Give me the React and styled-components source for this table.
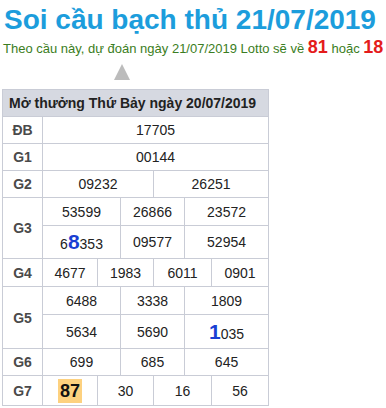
import React from 'react';
import styled, { createGlobalStyle } from 'styled-components';

const GlobalStyle = createGlobalStyle`
  body {
    margin: 0;
    background: #ffffff;
    font-family: "Liberation Sans", Arial, sans-serif;
  }
`;

const Page = styled.div`
  padding: 0 0 0 2px;
  width: 384px;
`;

const Title = styled.h1`
  margin: 0;
  padding: 4px 0 0 2px;
  font-size: 28px;
  line-height: 32px;
  font-weight: bold;
  color: #1c9ddc;
`;

const Subtitle = styled.p`
  margin: 0;
  padding: 1px 0 0 1px;
  font-size: 13px;
  line-height: 20px;
  color: #3b7d22;
  white-space: nowrap;
`;

const Hot = styled.b`
  color: #e41b1b;
  font-size: 18px;
`;

const Pointer = styled.div`
  width: 0;
  height: 0;
  margin: 5px 0 9px 112px;
  border-left: 8px solid transparent;
  border-right: 8px solid transparent;
  border-bottom: 16px solid #bcbcbc;
`;

const Table = styled.table`
  border-collapse: collapse;
  table-layout: fixed;
  width: 267px;
  border: 1px solid #c9ccd6;
`;

const Cell = styled.td`
  border: 1px solid #c9ccd6;
  padding: 0;
  height: ${p => p.$h || 26}px;
  text-align: center;
  font-size: 14px;
  color: #222;
`;

const Label = styled(Cell)`
  font-weight: bold;
  color: #4a4a4a;
  font-size: 14px;
`;

const Head = styled.th`
  background: #d6d9e1;
  border: 1px solid #c9ccd6;
  height: 26px;
  padding: 0 0 0 6px;
  text-align: left;
  font-size: 14px;
  font-weight: bold;
  color: #222;
`;

const Mark = styled.b`
  color: #1a3fd3;
  font-size: 21px;
`;

const Chosen = styled.b`
  display: inline-block;
  background: #fdd17f;
  color: #111;
  font-size: 18px;
  line-height: 24px;
  padding: 0 2px;
`;

const widths = [40, 55, 23, 33, 31, 27, 57];

export default function App() {
  return (
    <Page>
      <GlobalStyle />
      <Title>Soi cầu bạch thủ 21/07/2019</Title>
      <Subtitle>
        Theo cầu này, dự đoán ngày 21/07/2019 Lotto sẽ về <Hot>81</Hot> hoặc <Hot>18</Hot>
      </Subtitle>
      <Pointer />
      <Table>
        <colgroup>
          {widths.map((w, i) => <col key={i} style={{ width: w }} />)}
        </colgroup>
        <thead>
          <tr><Head colSpan={7}>Mở thưởng Thứ Bảy ngày 20/07/2019</Head></tr>
        </thead>
        <tbody>
          <tr><Label>ĐB</Label><Cell colSpan={6}>17705</Cell></tr>
          <tr><Label>G1</Label><Cell colSpan={6}>00144</Cell></tr>
          <tr>
            <Label>G2</Label>
            <Cell colSpan={3}>09232</Cell>
            <Cell colSpan={3}>26251</Cell>
          </tr>
          <tr>
            <Label rowSpan={2}>G3</Label>
            <Cell colSpan={2} $h={27}>53599</Cell>
            <Cell colSpan={2}>26866</Cell>
            <Cell colSpan={2}>23572</Cell>
          </tr>
          <tr>
            <Cell colSpan={2} $h={32}>6<Mark>8</Mark>353</Cell>
            <Cell colSpan={2}>09577</Cell>
            <Cell colSpan={2}>52954</Cell>
          </tr>
          <tr>
            <Label $h={27}>G4</Label>
            <Cell>4677</Cell>
            <Cell colSpan={2}>1983</Cell>
            <Cell colSpan={2}>6011</Cell>
            <Cell>0901</Cell>
          </tr>
          <tr>
            <Label rowSpan={2}>G5</Label>
            <Cell colSpan={2} $h={27}>6488</Cell>
            <Cell colSpan={2}>3338</Cell>
            <Cell colSpan={2}>1809</Cell>
          </tr>
          <tr>
            <Cell colSpan={2} $h={33}>5634</Cell>
            <Cell colSpan={2}>5690</Cell>
            <Cell colSpan={2}><Mark>1</Mark>035</Cell>
          </tr>
          <tr>
            <Label>G6</Label>
            <Cell colSpan={2}>699</Cell>
            <Cell colSpan={2}>685</Cell>
            <Cell colSpan={2}>645</Cell>
          </tr>
          <tr>
            <Label $h={29}>G7</Label>
            <Cell><Chosen>87</Chosen></Cell>
            <Cell colSpan={2}>30</Cell>
            <Cell colSpan={2}>16</Cell>
            <Cell>56</Cell>
          </tr>
        </tbody>
      </Table>
    </Page>
  );
}
